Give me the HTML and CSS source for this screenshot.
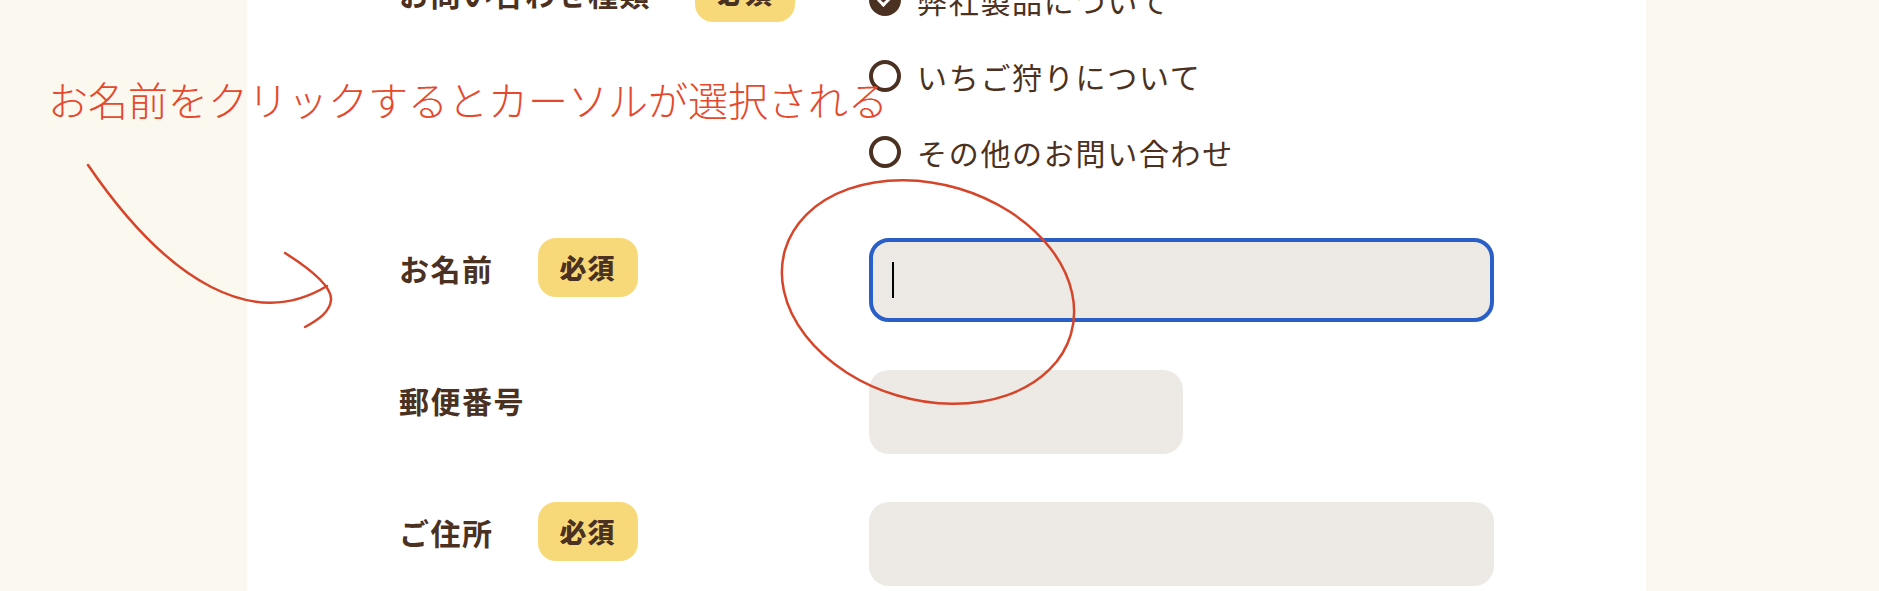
FILE: index.html
```html
<!DOCTYPE html>
<html lang="ja">
<head>
    <meta charset="utf-8">
    <title>お問い合わせ</title>
    <meta name="viewport" content="width=device-width, initial-scale=1.0">
    <link rel="stylesheet" href="styles.css">
</head>
<body>
    <div class="page">
        <main class="sheet">
            <form class="contact-form">
                <div class="form-row">
                    <div class="form-label">
                        <span class="label-text">お問い合わせ種類</span>
                        <span class="badge">必須</span>
                    </div>
                    <ul class="radio-list">
                        <li class="radio-item is-checked"><span class="radio-mark"></span>弊社製品について</li>
                        <li class="radio-item"><span class="radio-mark"></span>いちご狩りについて</li>
                        <li class="radio-item"><span class="radio-mark"></span>その他のお問い合わせ</li>
                    </ul>
                </div>

                <div class="form-row">
                    <div class="form-label">
                        <span class="label-text">お名前</span>
                        <span class="badge">必須</span>
                    </div>
                    <div class="field is-focus"><span class="caret"></span></div>
                </div>

                <div class="form-row">
                    <div class="form-label">
                        <span class="label-text">郵便番号</span>
                    </div>
                    <div class="field field-short"></div>
                </div>

                <div class="form-row">
                    <div class="form-label">
                        <span class="label-text">ご住所</span>
                        <span class="badge">必須</span>
                    </div>
                    <div class="field"></div>
                </div>
            </form>
        </main>
    </div>

    <!-- 説明用の書き込み -->
    <p class="note">お名前をクリックするとカーソルが選択される</p>
    <svg class="note-lines" width="1879" height="591" viewBox="0 0 1879 591">
        <path d="M88 165 C170 285 255 330 327 286" />
        <path d="M285 253 C315 272 332 288 331 300 C330 312 318 320 305 327" />
        <ellipse cx="928" cy="292" rx="149" ry="108" transform="rotate(16.5 928 292)" />
    </svg>
</body>
</html>
```

FILE: styles.css
```css
body {
    margin: 0;
    height: 591px;
    overflow: hidden;
    background-color: #fbf8f0;
    font-family: "Noto Sans CJK JP", "Noto Sans", sans-serif;
    color: #4b3121;
}

.page {
    position: relative;
}

.sheet {
    width: 1399px;
    height: 591px;
    margin-left: 247px;
    padding-left: 152px;
    box-sizing: border-box;
    background-color: #fff;
    overflow: hidden;
}

.contact-form {
    margin-top: -37px;
}

.form-row {
    display: grid;
    grid-template-columns: 470px 1fr;
    align-items: start;
    margin-bottom: 48px;
}

.form-label {
    display: flex;
    align-items: center;
    height: 59px;
}

.label-text {
    font-size: 30px;
    font-weight: 700;
    letter-spacing: 1.5px;
}

.badge {
    display: flex;
    align-items: center;
    justify-content: center;
    width: 100px;
    height: 59px;
    margin-left: 44px;
    border-radius: 18px;
    background-color: #f8d97a;
    font-size: 27px;
    font-weight: 900;
    letter-spacing: 1px;
}

.radio-list {
    list-style: none;
    margin: 0;
    padding: 13px 0 14px;
    display: flex;
    flex-direction: column;
    gap: 28px;
}

.radio-item {
    display: flex;
    align-items: center;
    height: 48px;
    font-size: 30px;
    font-weight: 400;
    letter-spacing: 1.7px;
}

.radio-mark {
    position: relative;
    width: 32px;
    height: 32px;
    margin-right: 16px;
    border: 4px solid #4b3121;
    border-radius: 50%;
    box-sizing: border-box;
}

.is-checked .radio-mark {
    background-color: #4b3121;
}

.is-checked .radio-mark::after {
    content: "";
    position: absolute;
    left: 8px;
    top: 3px;
    width: 6px;
    height: 12px;
    border-right: 3px solid #fff;
    border-bottom: 3px solid #fff;
    transform: rotate(45deg);
}

.field {
    width: 625px;
    height: 84px;
    border: 4px solid transparent;
    border-radius: 20px;
    box-sizing: border-box;
    background-color: #edeae5;
    display: flex;
    align-items: center;
    padding-left: 19px;
}

.field-short {
    width: 314px;
}

.field.is-focus {
    border-color: #2a5fc8;
}

.caret {
    width: 2px;
    height: 36px;
    background-color: #000;
}

.note {
    position: absolute;
    left: 48px;
    top: 79px;
    margin: 0;
    font-size: 40px;
    line-height: 40px;
    font-weight: 300;
    color: #e5482c;
    white-space: nowrap;
}

.note-lines {
    position: absolute;
    left: 0;
    top: 0;
    pointer-events: none;
    fill: none;
    stroke: #d6442a;
    stroke-width: 2.5;
    stroke-linecap: round;
}
```
